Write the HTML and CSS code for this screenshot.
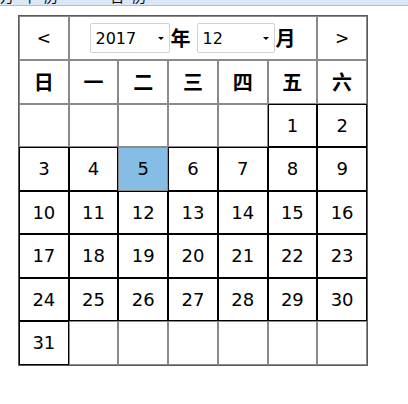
FILE: index.html
```html
<!DOCTYPE html>
<html lang="zh-CN">
<head>
<meta charset="utf-8">
<title>万年历</title>
<link rel="stylesheet" href="styles.css">
</head>
<body>
<div class="titlebar"><span class="title">万年历 · 日历</span></div>
<table class="cal">
  <tr class="head">
    <td class="nav">&lt;</td>
    <td class="picker" colspan="5">
      <div class="picker-row">
        <span class="sel sel-year">
          <select>
            <option>2016</option>
            <option selected>2017</option>
            <option>2018</option>
          </select>
        </span>
        <span class="unit">年</span>
        <span class="sel sel-month">
          <select>
            <option>11</option>
            <option selected>12</option>
          </select>
        </span>
        <span class="unit">月</span>
      </div>
    </td>
    <td class="nav">&gt;</td>
  </tr>
  <tr class="week">
    <td>日</td><td>一</td><td>二</td><td>三</td><td>四</td><td>五</td><td>六</td>
  </tr>
  <tr class="days">
    <td class="empty"></td><td class="empty"></td><td class="empty"></td><td class="empty"></td><td class="empty"></td><td>1</td><td>2</td>
  </tr>
  <tr class="days">
    <td>3</td><td>4</td><td class="today">5</td><td>6</td><td>7</td><td>8</td><td>9</td>
  </tr>
  <tr class="days">
    <td>10</td><td>11</td><td>12</td><td>13</td><td>14</td><td>15</td><td>16</td>
  </tr>
  <tr class="days">
    <td>17</td><td>18</td><td>19</td><td>20</td><td>21</td><td>22</td><td>23</td>
  </tr>
  <tr class="days">
    <td>24</td><td>25</td><td>26</td><td>27</td><td>28</td><td>29</td><td>30</td>
  </tr>
  <tr class="days">
    <td>31</td><td class="empty"></td><td class="empty"></td><td class="empty"></td><td class="empty"></td><td class="empty"></td><td class="empty"></td>
  </tr>
</table>
</body>
</html>
```
FILE: styles.css
```css
html, body {
  margin: 0;
  padding: 0;
  background: #ffffff;
}

body {
  font-family: "DejaVu Sans", "Noto Sans CJK SC", sans-serif;
  color: #000;
}

.titlebar {
  height: 5px;
  background: #dbe7f6;
  border-bottom: 1px solid #a9bfdc;
  overflow: hidden;
}

.titlebar .title {
  display: block;
  font-family: "Noto Sans CJK SC", sans-serif;
  font-size: 14px;
  line-height: 14px;
  margin-top: -11px;
  color: #000;
  letter-spacing: 8px;
}

.cal {
  margin: 9px 0 0 18px;
  border-collapse: separate;
  border-spacing: 0;
  border: 1px solid #5a5a5a;
  table-layout: fixed;
  width: 350px;
}

.cal td {
  border: 1px solid #000;
  padding: 0;
  text-align: center;
  vertical-align: middle;
  font-size: 18px;
  height: 41.5px;
}

.cal .head td {
  height: 42px;
  border-color: #8a8a8a;
}

.cal .nav {
  font-family: "DejaVu Sans", sans-serif;
  font-size: 17px;
}

.picker-row {
  display: flex;
  justify-content: center;
  align-items: center;
}

.sel {
  position: relative;
  display: inline-block;
  height: 30px;
}

.sel select {
  appearance: none;
  -webkit-appearance: none;
  height: 30px;
  border: 1px solid #d2d2d2;
  border-radius: 2px;
  background: #fff;
  font-family: "DejaVu Sans", sans-serif;
  font-size: 16px;
  color: #000;
  padding: 0 0 0 4px;
  margin: 0;
  outline: none;
}

.sel-year select { width: 80px; }
.sel-month select { width: 78px; }

.sel::after {
  content: "";
  position: absolute;
  right: 6px;
  top: 14px;
  border-left: 3px solid transparent;
  border-right: 3px solid transparent;
  border-top: 3px solid #000;
}

.unit {
  font-family: "Noto Sans CJK SC", sans-serif;
  font-weight: bold;
  font-size: 20px;
  line-height: 24px;
}

.sel-month {
  margin-left: 7px;
}

.cal .week td {
  font-family: "Noto Sans CJK SC", sans-serif;
  font-weight: bold;
  font-size: 20px;
  border-color: #8a8a8a;
}

.cal td.empty {
  border-color: #8a8a8a;
}

.cal td.today {
  background: #86bde5;
  border-color: #8a8a8a;
}
```
